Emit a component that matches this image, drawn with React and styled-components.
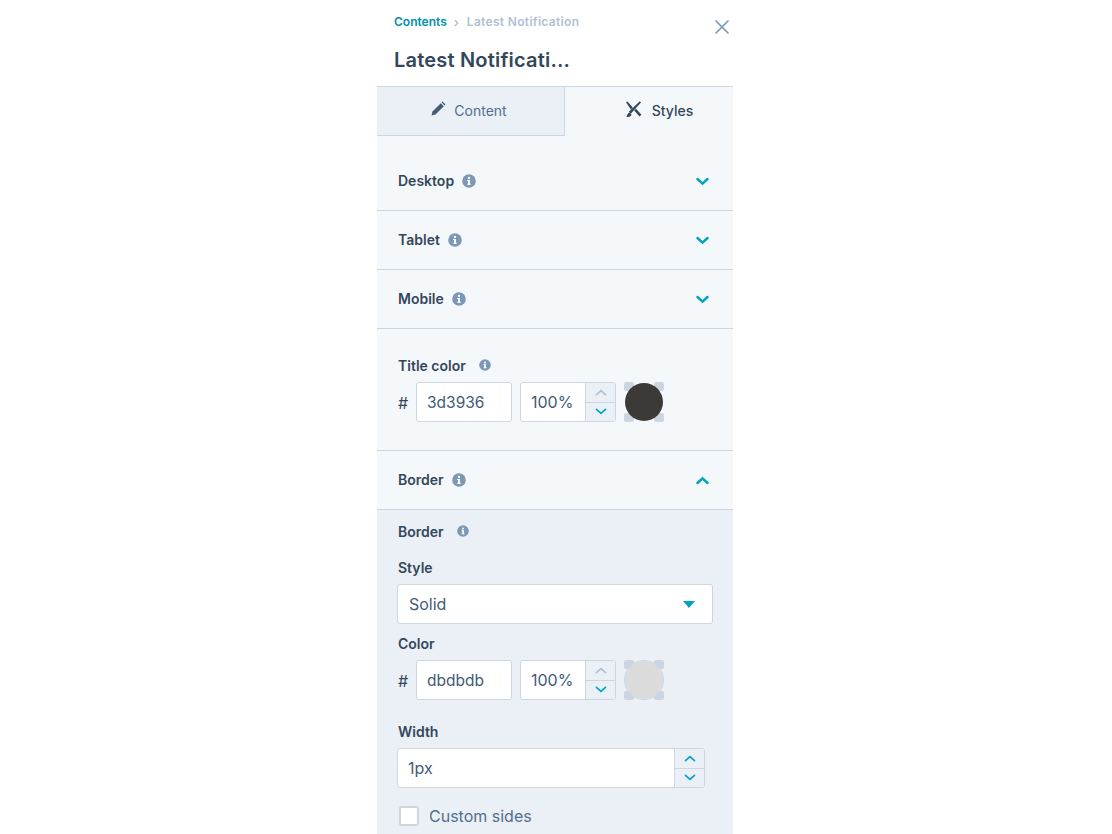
import React from "react";
import styled, { createGlobalStyle } from "styled-components";

const Global = createGlobalStyle`
  html, body { margin: 0; padding: 0; background: #fff; height: 834px; overflow: hidden; }
  * { box-sizing: border-box; }
  body { font-family: Inter, "Noto Sans", sans-serif; color: #33475b; }
`;

const Panel = styled.div`
  width: 356px; height: 834px; margin-left: 377px; overflow: hidden;
  background: #f5f8fa; display: flex; flex-direction: column;
`;
const Header = styled.header`
  position: relative; height: 86px; background: #fff; padding: 13px 17px 0; flex: none;
`;
const Crumbs = styled.div`
  display: flex; align-items: center; height: 17px; font-size: 12px; font-weight: 600; gap: 7px;
`;
const CrumbLink = styled.span`color: #0091ae;`;
const CrumbSep = styled.span`color: #99acc2; font-size: 13px; font-weight: 400;`;
const CrumbCurrent = styled.span`color: #b0c1d4; letter-spacing: .32px; margin-left: 1px;`;
const Title = styled.h1`
  margin: 15px 0 0; font-size: 20px; line-height: 30px; font-weight: 600; color: #33475b; letter-spacing: .2px;
`;
const Close = styled.button`
  position: absolute; top: 20px; right: 4px; width: 14px; height: 14px; padding: 0;
  border: 0; background: none; display: block;
  svg { display: block; }
`;
const Tabs = styled.div`display: flex; height: 50px; flex: none; border-top: 1px solid #cbd6e2;`;
const Tab = styled.div`
  flex: ${p => (p.$active ? "0 0 168px" : "0 0 188px")};
  display: flex; align-items: center; justify-content: center;
  gap: ${p => (p.$active ? 10 : 8)}px;
  font-size: 14px;
  padding-bottom: ${p => (p.$active ? 2 : 1)}px;
  padding-left: ${p => (p.$active ? 20 : 0)}px;
  padding-right: ${p => (p.$active ? 0 : 4)}px;
  background: ${p => (p.$active ? "#f5f8fa" : "#eaf0f6")};
  color: ${p => (p.$active ? "#33475b" : "#516f90")};
  font-weight: ${p => (p.$active ? 500 : 400)};
  ${p => (p.$active ? "" : "border-right: 1px solid #cbd6e2; border-bottom: 1px solid #cbd6e2;")}
  svg { display: block; margin-top: -4px; }
`;
const Row = styled.div`
  height: 59px; flex: none; display: flex; align-items: center; padding: 0 24px 0 21px;
  margin-top: ${p => p.$top || 0}px;
  border-bottom: 1px solid #cbd6e2;
`;
const RowLabel = styled.span`
  font-size: 14px; font-weight: 600; color: #33475b; margin-right: 8px; padding-bottom: 2px;
`;
const Chevron = styled.svg`margin-left: auto; display: block;`;
const Info = styled.svg`display: block; flex: none;`;
const TitleSection = styled.section`
  height: 122px; flex: none; padding: 27px 20px 0; border-bottom: 1px solid #cbd6e2;
`;
const FieldLabel = styled.div`
  display: flex; align-items: center; height: 20px; padding: 0 0 2px 1px;
  font-size: 14px; font-weight: 600; color: #33475b;
  gap: ${p => p.$gap || 0}px;
  margin-top: ${p => p.$top || 0}px;
`;
const ColorRow = styled.div`display: flex; align-items: center; height: 40px; margin-top: 6px;`;
const Hash = styled.span`width: 19px; padding-left: 1px; font-size: 16px; color: #33475b; padding-top: 1px;`;
const TextBox = styled.div`
  height: 40px; width: 96px; flex: none; background: #fff; border: 1px solid #cbd6e2; border-radius: 3px;
  font-size: 15.5px; color: #425b76; display: flex; align-items: center; padding-left: 10px;
`;
const Stepper = styled.div`
  height: 40px; width: ${p => p.$w}px; flex: none; display: flex; margin-left: ${p => p.$left || 0}px;
  margin-top: ${p => p.$top || 0}px;
  background: #fff; border: 1px solid #cbd6e2; border-radius: 3px; overflow: hidden;
`;
const StepValue = styled.div`
  flex: 1; display: flex; align-items: center; padding-left: 10px; font-size: 16px; color: #425b76;
`;
const StepButtons = styled.div`
  width: 30px; flex: none; display: flex; flex-direction: column; background: #eaf0f6; border-left: 1px solid #cbd6e2;
`;
const StepButton = styled.div`
  flex: 1; display: flex; align-items: center; justify-content: center;
  & + & { border-top: 1px solid #cbd6e2; }
`;
const Swatch = styled.div`
  position: relative; width: 40px; height: 40px; margin-left: 8px; flex: none;
`;
const Handle = styled.i`
  position: absolute; width: 10px; height: 9px; background: #cbd6e2; border-radius: 2px;
  ${p => (p.$b ? "bottom: 0;" : "top: 0;")}
  ${p => (p.$r ? "right: 0;" : "left: 0;")}
`;
const Disc = styled.div`
  position: absolute; inset: 0; border-radius: 50%; background: ${p => p.$c};
  background-clip: padding-box;
  border: 1px solid ${p => p.$line};
`;
const Nested = styled.section`
  flex: 1; background: #eaf0f6; padding: 12px 20px 0;
`;
const Select = styled.div`
  height: 40px; width: 316px; margin-top: 6px; background: #fff; border: 1px solid #cbd6e2; border-radius: 3px;
  display: flex; align-items: center; justify-content: space-between; padding: 0 17px 0 11px;
  font-size: 16px; color: #425b76;
`;
const Caret = styled.i`
  width: 0; height: 0; border-left: 6.5px solid transparent; border-right: 6.5px solid transparent;
  border-top: 7px solid #00a4bd; display: block;
`;
const CheckRow = styled.label`
  display: flex; align-items: center; margin-top: 18px; padding-left: 2px; font-size: 16px; color: #516f90; gap: 10px;
`;
const Box = styled.span`
  width: 20px; height: 20px; background: #fff; border: 2px solid #cbd6e2; border-radius: 3px; flex: none;
`;

const InfoIcon = ({ s = 14 }) => (
  <Info width={s} height={s} viewBox="0 0 14 14">
    <circle cx="7" cy="7" r="6.8" fill="#7c98b6" />
    <rect x="6" y="6" width="2" height="4.6" fill="#fff" />
    <rect x="5.2" y="6" width="2" height="1" fill="#fff" />
    <rect x="5.2" y="9.8" width="3.6" height="1" fill="#fff" />
    <circle cx="7" cy="4" r="1.15" fill="#fff" />
  </Info>
);
const ChevDown = () => (
  <Chevron width="13" height="9" viewBox="0 0 13 9">
    <path d="M1.5 2 6.5 6.6l5-4.6" fill="none" stroke="#00a4bd" strokeWidth="2.5" strokeLinecap="round" />
  </Chevron>
);
const ChevUp = () => (
  <Chevron width="13" height="9" viewBox="0 0 13 9">
    <path d="M1.5 7 6.5 2.4l5 4.6" fill="none" stroke="#00a4bd" strokeWidth="2.5" strokeLinecap="round" />
  </Chevron>
);
const Mini = ({ up, c }) => (
  <svg width="12" height="7" viewBox="0 0 12 7" style={{ display: "block" }}>
    <path d={up ? "M1.5 5.6 6 1.6l4.5 4" : "M1.5 1.4 6 5.4l4.5-4"} fill="none" stroke={c} strokeWidth="1.7" strokeLinecap="round" />
  </svg>
);
const StepButtonsBlock = ({ upColor = "#b0c1d4" }) => (
  <StepButtons>
    <StepButton><Mini up c={upColor} /></StepButton>
    <StepButton><Mini c="#00a4bd" /></StepButton>
  </StepButtons>
);
const ColorField = ({ hex, color, line }) => (
  <ColorRow>
    <Hash>#</Hash>
    <TextBox>{hex}</TextBox>
    <Stepper $w={96} $left={8}>
      <StepValue>100%</StepValue>
      <StepButtonsBlock />
    </Stepper>
    <Swatch>
      <Handle /><Handle $r /><Handle $b /><Handle $b $r />
      <Disc $c={color} $line={line} />
    </Swatch>
  </ColorRow>
);

export default function App() {
  return (
    <>
      <Global />
      <Panel>
        <Header>
          <Crumbs>
            <CrumbLink>Contents</CrumbLink>
            <CrumbSep>›</CrumbSep>
            <CrumbCurrent>Latest Notification</CrumbCurrent>
          </Crumbs>
          <Title>Latest Notificati...</Title>
          <Close aria-label="Close">
            <svg width="14" height="14" viewBox="0 0 14 14">
              <path d="M1 1l12 12M13 1 1 13" stroke="#7c98b6" strokeWidth="1.7" strokeLinecap="round" />
            </svg>
          </Close>
        </Header>
        <Tabs>
          <Tab>
            <svg width="16" height="16" viewBox="0 0 16 16">
              <path d="M1.5 14.5l1-4L10.8 2.2l3 3L5.5 13.5z" fill="#425b76" />
              <path d="M11.6 1.4l.9-.9 3 3-.9.9z" fill="#425b76" />
            </svg>
            Content
          </Tab>
          <Tab $active>
            <svg width="17" height="16" viewBox="0 0 17 16">
              <path d="M1 1.2 2.4.4l5.4 6-1.9 2.2zM16 1.4 14.8.2 3.8 10.8l2 2z" fill="#33475b" />
              <path d="M9.2 9.6 11 7.8l5.5 5.9-2 1.9z" fill="#33475b" />
              <path d="M.6 15.6c2-.2 1.4-3 3.6-4.2l2.4 2.2c-.8 2.2-3.6 3-6 2z" fill="#33475b" />
            </svg>
            Styles
          </Tab>
        </Tabs>
        <Row $top={16}><RowLabel>Desktop</RowLabel><InfoIcon /><ChevDown /></Row>
        <Row><RowLabel>Tablet</RowLabel><InfoIcon /><ChevDown /></Row>
        <Row><RowLabel>Mobile</RowLabel><InfoIcon /><ChevDown /></Row>
        <TitleSection>
          <FieldLabel $gap={13}>Title color <InfoIcon s={12} /></FieldLabel>
          <ColorField hex="3d3936" color="#3d3936" line="transparent" />
        </TitleSection>
        <Row><RowLabel>Border</RowLabel><InfoIcon /><ChevUp /></Row>
        <Nested>
          <FieldLabel $gap={13}>Border <InfoIcon s={12} /></FieldLabel>
          <FieldLabel $top={16}>Style</FieldLabel>
          <Select>Solid<Caret /></Select>
          <FieldLabel $top={10}>Color</FieldLabel>
          <ColorField hex="dbdbdb" color="#dbdbdb" line="#cbd6e2" />
          <FieldLabel $top={22}>Width</FieldLabel>
          <Stepper $w={308} $top={6}>
            <StepValue>1px</StepValue>
            <StepButtonsBlock upColor="#00a4bd" />
          </Stepper>
          <CheckRow><Box />Custom sides</CheckRow>
        </Nested>
      </Panel>
    </>
  );
}
